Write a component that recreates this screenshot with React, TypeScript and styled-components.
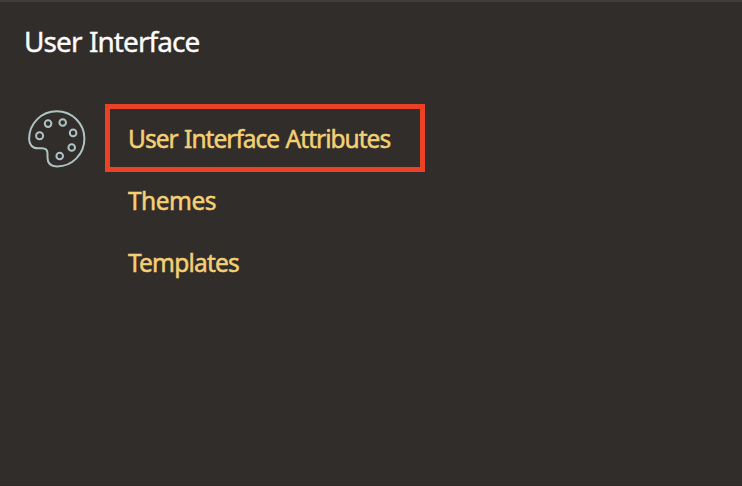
import React from "react";
import styled, { createGlobalStyle } from "styled-components";

const GlobalStyle = createGlobalStyle`
  * { box-sizing: border-box; }
  body { margin: 0; background: #312d2a; }
`;

const Panel = styled.main`
  height: 486px;
  padding: 22px 24px 0;
  overflow: hidden;
  background: #312d2a;
  border-top: 2px solid #403c39;
  border-bottom: 1px solid #2d282a;
  font-family: "Noto Sans", "Open Sans", sans-serif;
`;

const Title = styled.h1`
  margin: 0;
  font-size: 28px;
  font-weight: 400;
  line-height: 34px;
  letter-spacing: -0.92px;
  word-spacing: 1px;
  -webkit-text-stroke: 0.4px #fcfbfa;
  color: #fcfbfa;
  white-space: nowrap;
`;

const Content = styled.div`
  display: flex;
  align-items: flex-start;
  margin-top: 46px;
`;

const PaletteIcon = styled.svg`
  flex: none;
  width: 60px;
  height: 60px;
  margin: 5px 18px 0 3px;
  fill: none;
  stroke: #aec3c3;
  stroke-width: 2;
`;

const Links = styled.nav`
  display: flex;
  flex-direction: column;
  align-items: flex-start;
`;

const Link = styled.a<{ $highlighted?: boolean; $tracking: number }>`
  display: flex;
  align-items: center;
  width: 320px;
  height: ${(p) => (p.$highlighted ? 68 : 62)}px;
  padding-top: ${(p) => (p.$highlighted ? 2 : 0)}px;
  padding-left: ${(p) => (p.$highlighted ? 18 : 23)}px;
  border: ${(p) => (p.$highlighted ? "5px solid #eb4124" : "0")};
  margin-bottom: ${(p) => (p.$highlighted ? -2 : 0)}px;
  font-size: 24.5px;
  font-weight: 400;
  line-height: 34px;
  letter-spacing: ${(p) => p.$tracking}px;
  word-spacing: 1px;
  -webkit-text-stroke: 0.5px #f4d075;
  color: #f4d075;
  white-space: nowrap;
`;

export default function App() {
  return (
    <>
      <GlobalStyle />
      <Panel>
        <Title>User Interface</Title>
        <Content>
          <PaletteIcon viewBox="0 0 60 60" aria-hidden="true">
            <path d="M29.8 2.3C45 2.3 57.4 14.5 57.4 29.8S45.2 57.4 30.1 57.4C24.2 57.4 20.5 54.3 20.5 48.5V44.7C20.5 41.1 18.8 39.3 15.2 39.3H11.1C5.3 39.3 2.1 35.7 2.1 29.8C2.1 14.6 14.3 2.3 29.8 2.3Z" />
            <circle cx="12.6" cy="26.7" r="3.5" />
            <circle cx="21.1" cy="14.6" r="3.3" />
            <circle cx="35.7" cy="13.5" r="3.3" />
            <circle cx="46.1" cy="23.9" r="3.3" />
            <circle cx="44.7" cy="38.5" r="3.3" />
            <circle cx="32.7" cy="47" r="3.3" />
          </PaletteIcon>
          <Links>
            <Link $highlighted $tracking={-0.98}>User Interface Attributes</Link>
            <Link $tracking={-0.5}>Themes</Link>
            <Link $tracking={-0.8}>Templates</Link>
          </Links>
        </Content>
      </Panel>
    </>
  );
}
